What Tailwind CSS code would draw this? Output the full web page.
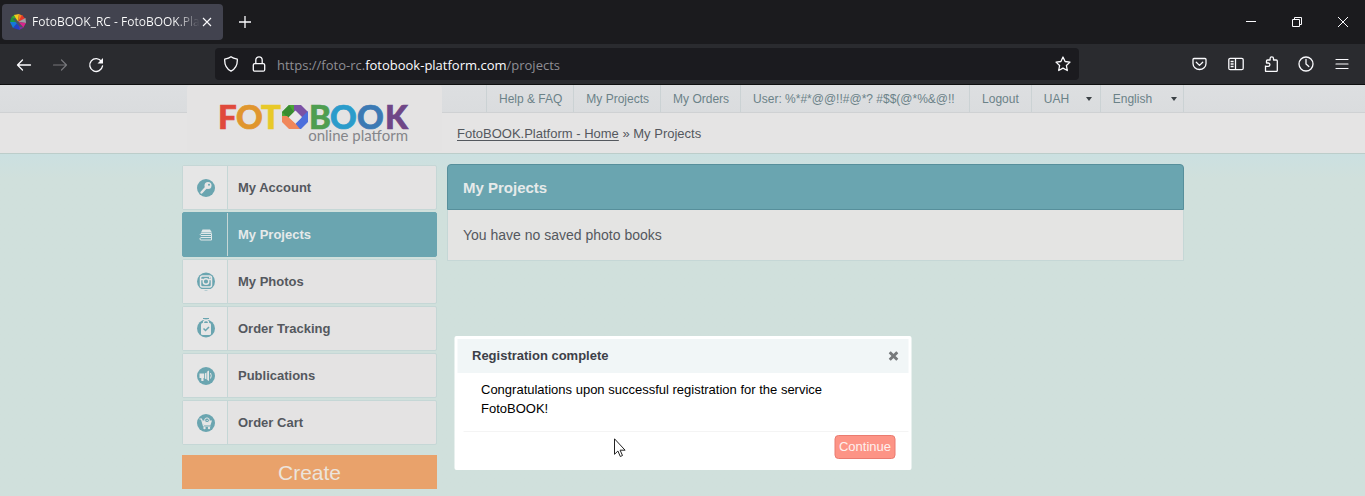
<!DOCTYPE html>
<html lang="en">
<head>
<meta charset="utf-8">
<meta name="viewport" content="width=device-width, initial-scale=1">
<title>FotoBOOK_RC - FotoBOOK.Platform</title>
<script src="https://cdn.jsdelivr.net/npm/@tailwindcss/browser@4"></script>
</head>
<body class="flex min-h-screen flex-col bg-[#d0e0dc] font-['Liberation_Sans',sans-serif] text-[#54585e]">

<!-- Browser window -->
<header class="border-b border-black bg-[#2a2b2f] font-['Open_Sans','Noto_Sans',sans-serif] text-[#fbfbfe]">
  <div class="flex h-11 items-center bg-[#1b1b1e]">
    <div class="ml-0.5 flex h-9 w-[221px] items-center rounded bg-[#42434f] pl-2 pr-2">
      <svg class="h-4 w-4 shrink-0" viewBox="0 0 16 16" aria-hidden="true">
        <path fill="#1c9a3c" d="M8 8 0 8 1.500 3Z"/><path fill="#3aa935" d="M8 8 1.500 3 5 .5Z"/><path fill="#f3c81e" d="M8 8 4 1 9 0Z"/><path fill="#f58220" d="M8 8 9 0 13 2Z"/><path fill="#e4362a" d="M8 8 12 1 15.500 5Z"/><path fill="#a5a0a5" d="M8 8 15.500 4 16 9Z"/><path fill="#d9248c" d="M8 8 16 9 13 14Z"/><path fill="#7a2fa0" d="M8 8 13 14 9 16Z"/><path fill="#2240c8" d="M8 8 10 16 3 14Z"/><path fill="#1479d8" d="M8 8 3 14 0 8Z"/><path fill="#4a5560" d="m3 5 2-1 8 9-3 0Z"/>
      </svg>
      <span class="ml-1.5 w-[168px] overflow-hidden whitespace-nowrap bg-linear-to-r from-white from-85% to-transparent bg-clip-text text-xs text-transparent">FotoBOOK_RC - FotoBOOK.Platform</span>
      <button class="ml-px shrink-0" aria-label="Close tab"><svg class="h-3 w-3" viewBox="0 0 12 12" fill="none" stroke="currentColor" stroke-width="1.1"><path d="m2 2 8 8M10 2l-8 8"/></svg></button>
    </div>
    <button class="ml-4" aria-label="New tab"><svg class="h-3 w-3" viewBox="0 0 12 12" fill="none" stroke="currentColor" stroke-width="1.3"><path d="M6 0v12M0 6h12"/></svg></button>
    <div class="ml-auto flex gap-9 pr-[17px]">
      <button aria-label="Minimize"><svg class="h-2.5 w-2.5" viewBox="0 0 10 10" stroke="currentColor"><path d="M0 4.500h10"/></svg></button>
      <button aria-label="Restore"><svg class="h-2.5 w-2.5" viewBox="0 0 10 10" fill="none" stroke="currentColor"><path d="M.5 2.500h7v7h-7zM2.500 2.500v-2h7v7h-2"/></svg></button>
      <button aria-label="Close window"><svg class="h-2.5 w-2.5" viewBox="0 0 10 10" stroke="currentColor"><path d="m0 0 10 10M10 0 0 10"/></svg></button>
    </div>
  </div>
  <div class="flex h-10 items-center">
    <div class="flex w-[215px] shrink-0 items-center gap-5 pt-0.5 pl-4">
      <button aria-label="Back"><svg class="h-4 w-4" viewBox="0 0 16 16" fill="none" stroke="currentColor" stroke-width="1.300" stroke-linecap="round" stroke-linejoin="round"><path d="M14.500 8h-13M6.500 3 1.500 8l5 5"/></svg></button>
      <button class="text-[#76777b]" aria-label="Forward"><svg class="h-4 w-4" viewBox="0 0 16 16" fill="none" stroke="currentColor" stroke-width="1.200" stroke-linecap="round" stroke-linejoin="round"><path d="M1.500 8h13M9.500 3l5 5-5 5"/></svg></button>
      <button aria-label="Reload"><svg class="h-4 w-4" viewBox="0 0 16 16" fill="none" stroke="currentColor" stroke-width="1.400" stroke-linecap="round"><path d="M13.500 4.500A6.400 6.400 0 1 0 14.500 9"/><path fill="currentColor" stroke="none" d="M15 1v5.500H9.500Z"/></svg></button>
    </div>
    <div class="flex h-8 w-[864px] items-center rounded bg-[#1b1b1f] px-2">
      <svg class="h-4 w-4 shrink-0" viewBox="0 0 16 16" fill="none" stroke="currentColor" stroke-width="1.300" stroke-linejoin="round" aria-hidden="true"><path d="M8 .8c1.500 1.300 3.800 2 6.300 2.400.3 5.500-1.500 9.500-6.300 12C3.200 12.700 1.400 8.700 1.700 3.200 4.200 2.800 6.500 2.100 8 .8Z"/></svg>
      <svg class="ml-3 h-4 w-4 shrink-0" viewBox="0 0 16 16" fill="none" stroke="currentColor" stroke-width="1.300" aria-hidden="true"><rect x="2.300" y="7.600" width="11.400" height="7.600" rx="1.500"/><path d="M4.800 7.500V4a3.200 3.200 0 0 1 6.400 0v3.500"/></svg>
      <div class="ml-2.5 flex-1 pt-[3px] text-[13px] text-[#8f8f95]">https://foto-rc.<span class="text-[#fbfbfe]">fotobook-platform.com</span>/projects</div>
      <button aria-label="Bookmark this page"><svg class="h-4 w-4" viewBox="0 0 16 16" fill="none" stroke="currentColor" stroke-width="1.300" stroke-linejoin="round"><path d="m8 1 2.100 4.500 4.900.6-3.600 3.400.9 5L8 12.100l-4.300 2.400.9-5L1 6.100l4.900-.6Z"/></svg></button>
    </div>
    <div class="ml-auto flex gap-5 pr-[15px]">
      <button aria-label="Save to Pocket"><svg class="h-4 w-4" viewBox="0 0 16 16" fill="none" stroke="currentColor" stroke-width="1.300" stroke-linecap="round" stroke-linejoin="round"><path d="M2 2.500h11q1 0 1 1v4a6.500 6 0 0 1-13 0v-4q0-1 1-1ZM4.300 6.300l3.200 3.100 3.200-3.100"/></svg></button>
      <button aria-label="Sidebars"><svg class="h-4 w-4" viewBox="0 0 16 16" fill="none" stroke="currentColor" stroke-width="1.300"><rect x=".8" y="2.300" width="14.400" height="11.400" rx="1.500"/><path d="M7.500 2.500v11M2.600 5.500h3M2.600 8h3M2.600 10.500h3"/></svg></button>
      <button aria-label="Extensions"><svg class="h-4 w-4" viewBox="0 0 16 16" fill="none" stroke="currentColor" stroke-width="1.300" stroke-linejoin="round"><path d="M1.500 9.500V15q0 .4.500.400h10.300q1 0 1-1V5q0-1-1-1H9.500V2.500a1.700 1.700 0 0 0-3.400 0V4H3.500q-1 0-1 1v2h1.700a1.700 1.700 0 0 1 0 3.400H1.500"/></svg></button>
      <button class="-ml-0.5" aria-label="History"><svg class="h-4 w-4" viewBox="0 0 16 16" fill="none" stroke="currentColor" stroke-width="1.300" stroke-linecap="round"><circle cx="8" cy="8" r="7"/><path d="M8 3.500V8l2.800 2.500"/></svg></button>
      <button aria-label="Menu"><svg class="h-4 w-4" viewBox="0 0 16 16" stroke="currentColor" stroke-width="1.200" stroke-linecap="round"><path d="M2 3.500h12M2 8h12M2 12.500h12"/></svg></button>
    </div>
  </div>
</header>

<!-- Site header -->
<div class="h-[69px] border-b border-[#bccdca] bg-[linear-gradient(to_bottom,#dddfe1_0,#dadcde_27px,#cfd1d3_27px,#cfd1d3_28px,#e5e4e4_28px)] shadow-[0_1px_2px_#bfd3d1]">
  <div class="mx-auto flex max-w-[1003px]">
    <a href="#" class="ml-1.5 w-[255px] shrink-0 rounded-t bg-[#e4e3e3]" aria-label="FotoBOOK online platform">
      <svg class="block h-[66px] w-full font-['Lato',sans-serif]" viewBox="187 85 255 66">
        <g class="font-black" font-size="33" stroke-width=".7">
          <text x="218" y="129" fill="#e04a3c" stroke="#e04a3c">F</text>
          <text x="236" y="129" fill="#e0962e" stroke="#e0962e">O</text>
          <text x="261" y="129" fill="#e8c928" stroke="#e8c928">T</text>
          <text x="309" y="129" fill="#4f9e50" stroke="#4f9e50">B</text>
          <text x="330" y="129" fill="#2b9ccb" stroke="#2b9ccb">O</text>
          <text x="357" y="129" fill="#3c7ab4" stroke="#3c7ab4">O</text>
          <text x="385" y="129" fill="#6f4787" stroke="#6f4787">K</text>
        </g>
        <path fill="#4aa536" d="M282 112 289 105H301L288 118H282Z"/>
        <path fill="#398c30" d="M282 112 289 105 294 112 288 118Z"/>
        <path fill="#7b52a5" d="M294 105H301L308 112V119H303L294 111Z"/>
        <path fill="#4c6fdc" d="M308 111V122L301 129H293L296 123Z"/>
        <path fill="#f0875a" d="M282 116V122L289 129H300L295 123 287 116Z"/>
        <path fill="#e9e8e8" d="m295.500 110.500 6.500 6.500-6.500 6.500-6.500-6.500Z"/>
        <text x="408" y="141" text-anchor="end" font-size="15" fill="#85868a">online platform</text>
      </svg>
    </a>
    <div class="flex-1">
      <nav class="flex h-[27px] items-stretch pl-11 text-xs leading-[28px] whitespace-nowrap text-[#6b8288] *:border-l *:border-[#cbd2d4]" aria-label="Account">
        <a href="#" class="pr-[11px] pl-3">Help &amp; FAQ</a><a href="#" class="pr-[11px] pl-3">My Projects</a><a href="#" class="pr-[11px] pl-3">My Orders</a><a href="#" class="w-[229px] pl-3">User: %*#*@@!!#@*? #$$(@*%&amp;@!!</a><a href="#" class="px-3">Logout</a>
        <div class="relative w-[69px] pl-3">
          <select aria-label="Currency" class="w-full appearance-none leading-[28px]"><option>UAH</option></select>
          <svg class="pointer-events-none absolute top-3 right-2 h-1 w-1.5" viewBox="0 0 6 4" fill="#3b4145" aria-hidden="true"><path d="M0 0h6L3 4Z"/></svg>
        </div>
        <div class="relative w-[84px] border-r pl-3">
          <select aria-label="Language" class="w-full appearance-none leading-[28px]"><option>English</option></select>
          <svg class="pointer-events-none absolute top-3 right-1.5 h-1 w-1.5" viewBox="0 0 6 4" fill="#3b4145" aria-hidden="true"><path d="M0 0h6L3 4Z"/></svg>
        </div>
      </nav>
      <div class="pt-3 pl-[15px] text-[13px] leading-5"><a href="#" class="underline underline-offset-2">FotoBOOK.Platform - Home</a> » My Projects</div>
    </div>
  </div>
</div>

<main class="flex-1 bg-linear-to-b from-[#cbe0e1] to-[#d0e0dc] to-[24px]">
  <div class="mx-auto flex max-w-[1003px] items-start gap-2.5 pt-2.5 pl-px">
    <aside class="w-[255px] shrink-0 pt-px">
      <nav class="flex flex-col gap-0.5 text-[13px] font-bold" aria-label="Sections">
        <a href="#" class="flex h-[45px] items-center rounded-xs border border-[#c5d7d6] bg-[#e4e3e3]">
          <span class="flex h-full w-[45px] items-center justify-center border-r border-[#c5d7d6] bg-[#e6e6e6] pl-0.5"><svg class="h-[18px] w-[18px]" viewBox="0 0 18 18"><circle cx="9" cy="9" r="9" fill="#6aa5b0"/><circle cx="11" cy="6.500" r="3.500" fill="#e6e6e6"/><path d="m9.500 8-5 5.500" stroke="#e6e6e6" stroke-width="2.400" stroke-linecap="round"/><circle cx="12" cy="5.700" r="1" fill="#6aa5b0"/></svg></span>
          <span class="pl-2.5">My Account</span>
        </a>
        <a href="#" aria-current="page" class="flex h-[45px] items-center rounded-xs border border-[#6aa5b0] bg-[#6aa5b0] text-[#e6eaea]">
          <span class="flex h-full w-[45px] items-center justify-center border-r border-[#c5d7d6] pl-0.5"><svg class="h-3 w-3.5" viewBox="0 0 14 12" fill="none" stroke="#dfe7e8"><path fill="#dfe7e8" stroke="none" d="M3.500.5h7.500l2 3H2Z"/><path d="M2 4.500h10.500v2H2q-1.500-1 0-2ZM2 8.500h10.500M12.500 6.500v4.500H1.500q-1.200-1 0-2.500"/></svg></span>
          <span class="pl-2.5">My Projects</span>
        </a>
        <a href="#" class="flex h-[45px] items-center rounded-xs border border-[#c5d7d6] bg-[#e4e3e3]">
          <span class="flex h-full w-[45px] items-center justify-center border-r border-[#c5d7d6] bg-[#e6e6e6] pl-0.5"><svg class="h-5 w-[18px]" viewBox="0 0 18 20"><circle cx="9" cy="9.500" r="9" fill="#6aa5b0"/><rect x="3.500" y="4" width="11" height="11" rx="2" fill="none" stroke="#e6e6e6" stroke-width="1.500"/><path d="M3.500 7.500h3M11.500 7.500h3M12 5.500h1.500" stroke="#e6e6e6" stroke-width="1.300"/><circle cx="9" cy="9.500" r="2.800" fill="none" stroke="#e6e6e6" stroke-width="1.400"/><path d="M4 17.500h10" stroke="#e6e6e6"/></svg></span>
          <span class="pl-2.5">My Photos</span>
        </a>
        <a href="#" class="flex h-[45px] items-center rounded-xs border border-[#c5d7d6] bg-[#e4e3e3]">
          <span class="flex h-full w-[45px] items-center justify-center border-r border-[#c5d7d6] bg-[#e6e6e6] pb-0.5 pl-0.5"><svg class="h-5 w-[18px]" viewBox="0 0 18 20"><circle cx="9" cy="10.500" r="9" fill="#6aa5b0"/><rect x="4" y="5" width="10" height="12" rx="1.500" fill="#e6e6e6"/><path d="M6.500 6V4.500a2.500 2 0 0 1 5 0V6" fill="none" stroke="#e6e6e6" stroke-width="1.300"/><path d="m6.500 10.500 2 2 3.500-3.500" fill="none" stroke="#6aa5b0" stroke-width="1.500"/><path d="M6 .5h6" stroke="#6aa5b0"/></svg></span>
          <span class="pl-2.5">Order Tracking</span>
        </a>
        <a href="#" class="flex h-[45px] items-center rounded-xs border border-[#c5d7d6] bg-[#e4e3e3]">
          <span class="flex h-full w-[45px] items-center justify-center border-r border-[#c5d7d6] bg-[#e6e6e6] pl-0.5"><svg class="h-[18px] w-[18px]" viewBox="0 0 18 18"><circle cx="9" cy="9" r="9" fill="#6aa5b0"/><path fill="#e6e6e6" d="M2.500 6.500H7v4.500H6.500v3H4.300v-3H2.500ZM7.800 6.500l1.700-1v7l-1.700-1ZM10.200 4.500l1.800-1v10.500l-1.800-1Z"/><path d="M13.500 6q1.500 2.800 0 5.500" fill="none" stroke="#e6e6e6"/></svg></span>
          <span class="pl-2.5">Publications</span>
        </a>
        <a href="#" class="flex h-[45px] items-center rounded-xs border border-[#c5d7d6] bg-[#e4e3e3]">
          <span class="flex h-full w-[45px] items-center justify-center border-r border-[#c5d7d6] bg-[#e6e6e6] pl-0.5"><svg class="h-[18px] w-[18px]" viewBox="0 0 18 18"><circle cx="9" cy="9" r="9" fill="#6aa5b0"/><path d="M2.500 5h2l2 7h7" fill="none" stroke="#e6e6e6" stroke-width="1.200"/><path fill="#e6e6e6" d="M5 6.500h10L13.500 11h-7Z"/><circle cx="10" cy="6.300" r="2.400" fill="#6aa5b0" stroke="#e6e6e6"/><path d="m9 6.300.8.8 1.500-1.500" fill="none" stroke="#e6e6e6" stroke-width=".8"/><circle cx="7.500" cy="14" r="1.200" fill="#e6e6e6"/><circle cx="12" cy="14" r="1.200" fill="#e6e6e6"/></svg></span>
          <span class="pl-2.5">Order Cart</span>
        </a>
      </nav>
      <button class="mt-2.5 h-[34px] w-full bg-[#e9a26b] pt-0.5 text-[21px] leading-8 text-[#ece4dc]">Create</button>
    </aside>
    <section class="min-w-0 flex-1">
      <h1 class="flex h-[46px] items-center rounded-t border border-[#578f9b] bg-[#6aa5b0] px-[15px] pt-0.5 text-[15px] font-bold text-[#e6eaea]">My Projects</h1>
      <p class="border border-t-0 border-[#c5d7d6] bg-[#e4e4e3] px-[15px] py-[15px] text-sm leading-5">You have no saved photo books</p>
    </section>
  </div>
</main>

<!-- Message shown over the page -->
<div role="dialog" aria-labelledby="dialog-title" class="absolute top-[336px] left-1/2 w-[457px] -translate-x-1/2 rounded-xs bg-white p-[3px]">
  <div class="flex h-[34px] items-center justify-between bg-[#f1f6f7] pr-2.5 pl-[15px]">
    <h2 id="dialog-title" class="text-[13px] font-bold text-[#3d4048]">Registration complete</h2>
    <button aria-label="Close"><svg class="h-2.5 w-2.5" viewBox="0 0 10 10" stroke="#777a7c" stroke-width="3"><path d="m1.200 1.200 7.600 7.600M8.800 1.200 1.200 8.800"/></svg></button>
  </div>
  <p class="h-[58px] pt-[7px] pr-16 pl-6 text-[13px] leading-[19px] text-black">Congratulations upon successful registration for the service FotoBOOK!</p>
  <div class="ml-1.5 flex justify-end border-t border-[#f4f4f4] pt-[3px] pr-[13px] pb-2">
    <button class="h-6 rounded border border-[#ea7b70] bg-[#fd9486] px-[3px] text-[13px] text-[#fdf0ee]">Continue</button>
  </div>
</div>

<!-- Mouse pointer -->
<svg class="pointer-events-none absolute top-[438px] left-[614px] h-5 w-3" viewBox="0 0 12 20" fill="#fff" stroke="#222" aria-hidden="true"><path d="M.5.800v15.500l3.400-3.300 2.400 5.500 2.200-1-2.400-5.300h5Z"/></svg>
</body>
</html>
